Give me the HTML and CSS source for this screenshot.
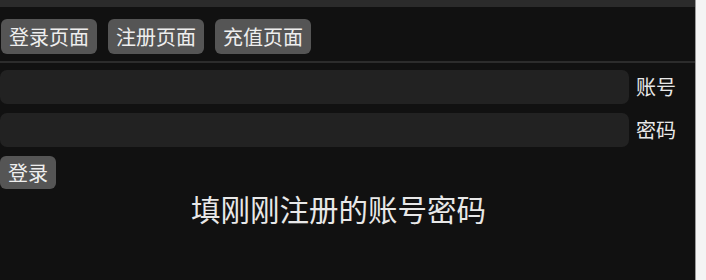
FILE: index.html
```html
<!DOCTYPE html>
<html lang="zh">
<head>
    <meta charset="UTF-8">
    <meta name="viewport" content="width=device-width, initial-scale=1.0">
    <title>登录</title>
    <link rel="stylesheet" href="styles.css">
</head>
<body>
    <div class="page">
        <div class="main">
            <div class="topbar"></div>
            <div class="nav">
                <button class="nav-btn">登录页面</button>
                <button class="nav-btn">注册页面</button>
                <button class="nav-btn">充值页面</button>
            </div>
            <div class="form">
                <div class="row">
                    <input class="field" type="text">
                    <span class="label">账号</span>
                </div>
                <div class="row">
                    <input class="field" type="password">
                    <span class="label">密码</span>
                </div>
                <button class="login-btn">登录</button>
                <div class="tip">填刚刚注册的账号密码</div>
            </div>
        </div>
        <div class="edge"></div>
    </div>
</body>
</html>
```

FILE: styles.css
```css
body {
    margin: 0;
    background-color: #111;
    color: #e8e8e8;
    font-family: "Noto Sans CJK SC", "Noto Sans", sans-serif;
    font-size: 20px;
}
.page {
    display: flex;
    height: 280px;
    overflow: hidden;
}
.main {
    width: 695px;
    background-color: #111;
}
.edge {
    flex: 1;
    background-color: #f4f4f4;
    border-left: 1px solid #9a9a9a;
}
.topbar {
    height: 7px;
    background-color: #2b2b2b;
}
.nav {
    display: flex;
    gap: 11px;
    padding: 12px 0 0 1px;
    height: 42px;
    border-bottom: 2px solid #2c2c2c;
}
.nav-btn, .login-btn {
    background-color: #555;
    color: #eee;
    border: none;
    border-radius: 6px;
    font-family: inherit;
    font-size: 20px;
    line-height: 29px;
    padding: 3px 8px;
    height: 35px;
    cursor: pointer;
}
.form {
    width: 677px;
    padding-top: 7px;
}
.row {
    display: flex;
    align-items: center;
    gap: 7px;
    margin-bottom: 9px;
}
.field {
    width: 629px;
    height: 34px;
    box-sizing: border-box;
    background-color: #222;
    border: none;
    border-radius: 7px;
    padding: 0 8px;
    color: #eee;
    outline: none;
}
.label {
    line-height: 34px;
    white-space: nowrap;
}
.login-btn {
    height: 33px;
    line-height: 27px;
    padding: 3px 8px;
    margin-top: 0;
}
.tip {
    text-align: center;
    font-size: 29.5px;
    line-height: 36px;
    margin-top: 1px;
}
```
